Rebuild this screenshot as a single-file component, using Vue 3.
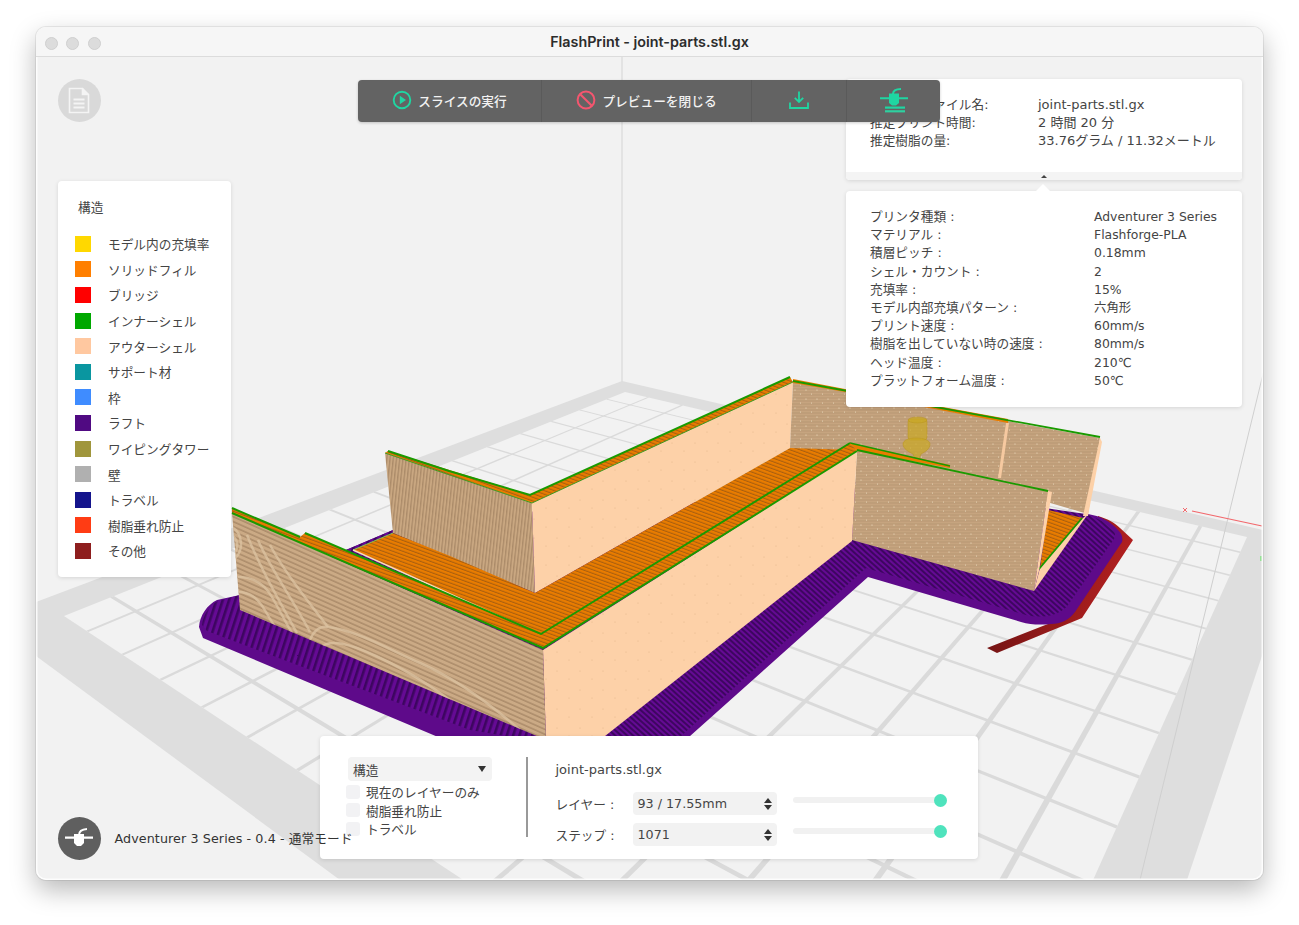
<template>
  <div class="window">
    <!-- Title bar -->
    <header class="titlebar">
      <div class="lights"><i></i><i></i><i></i></div>
      <span class="title">FlashPrint - joint-parts.stl.gx</span>
    </header>

    <main class="viewport">
      <!-- 3D scene, drawn in page coordinates -->
      <svg class="scene" viewBox="36 57 1227 823" width="1227" height="823">
        <defs>
          <pattern id="raftL" width="6" height="6" patternUnits="userSpaceOnUse" patternTransform="rotate(18)">
            <rect width="6" height="6" fill="#650a94" />
            <rect width="2.6" height="6" fill="#3d0660" />
          </pattern>
          <pattern id="raftR" width="4" height="4" patternUnits="userSpaceOnUse" patternTransform="rotate(-48)">
            <rect width="4" height="4" fill="#650a94" />
            <rect width="2" height="4" fill="#3d0660" />
          </pattern>
          <pattern id="orange" width="3.4" height="3.4" patternUnits="userSpaceOnUse" patternTransform="rotate(-70)">
            <rect width="3.4" height="3.4" fill="#e97c00" />
            <rect width="1.1" height="3.4" fill="#a95f10" />
          </pattern>
          <pattern id="tanStripe" width="4.5" height="4.5" patternUnits="userSpaceOnUse" patternTransform="rotate(-66)">
            <rect width="4.5" height="4.5" fill="#cbaa85" />
            <rect width="1.6" height="4.5" fill="#ad8d6b" />
          </pattern>
          <pattern id="tanWeave" width="3.2" height="3.2" patternUnits="userSpaceOnUse" patternTransform="rotate(6)">
            <rect width="3.2" height="3.2" fill="#c9a781" />
            <rect width="1.3" height="3.2" fill="#ab8b69" />
          </pattern>
          <pattern id="tanFine" width="11" height="9" patternUnits="userSpaceOnUse">
            <rect width="11" height="9" fill="#c6a47f" />
            <path d="M0 2h11M0 5h11M0 8h11" stroke="#b59572" stroke-width=".9" />
            <circle cx="3" cy="3" r=".6" fill="#f0e3c8" />
            <circle cx="8.5" cy="7" r=".5" fill="#f0e3c8" />
          </pattern>
          <pattern id="peach" width="23" height="19" patternUnits="userSpaceOnUse">
            <rect width="23" height="19" fill="#fdd1a8" />
            <circle cx="5" cy="6" r=".5" fill="#e0b186" />
            <circle cx="17" cy="14" r=".5" fill="#e0b186" />
          </pattern>
          <linearGradient id="skirt" x1="0" y1="0" x2="1" y2="0.3">
            <stop offset="0" stop-color="#5e1010" />
            <stop offset="1" stop-color="#b42020" />
          </linearGradient>
          <clipPath id="leftWall">
            <polygon points="232,513 543,650 546,740 240,610" />
          </clipPath>
        </defs>

        <!-- Print bed -->
        <polygon points="622,381 1263,530 1263,653 1187,880 340,880 36,656 36,602" fill="#dedede" />
        <polygon :points="bedInner" fill="#f2f2f2" />
        <polygon v-for="(line, i) in bedLines" :key="i" :points="line" fill="#dadada" />
        <line x1="622" y1="57" x2="622" y2="382" stroke="#dedede" stroke-width="1.5" />
        <line x1="1264" y1="370" x2="1140" y2="880" stroke="#cfcfcf" />
        <line x1="1192" y1="511" x2="1262" y2="526" stroke="#f2686c" stroke-width="1.2" />
        <path d="M1183 508l4 4M1187 508l-4 4" stroke="#f2686c" fill="none" />
        <path d="M1261 556v5" stroke="#7fe07f" stroke-width="1.5" />

        <!-- Skirt and raft -->
        <path d="M1098 516c10 3 17 7 22 12l13 12-51 78-85 35-10-5 66-26c8-3 14-7 20-12z" fill="url(#skirt)" />
        <path d="M199 627c1-12 8-22 18-27l23-5 153-65 227-30 468 14c12 2 22 7 30 16 4 4 5 8 4 12l-47 70c-6 8-14 12-24 12-10 1-20 1-30-2l-153-45-188 168H457L203 638z" fill="#5e0a8a" />
        <path d="M202 625c1-10 8-20 16-24l22-6 153-65 147 70v142l-70-12-263-99z" fill="url(#raftL)" />
        <path d="M540 742l140-5 186-169 160 47c9 2 18 2 26 0 7-2 12-5 16-10l46-66c2-4 1-7-2-10-8-8-17-12-27-15L860 480 540 650z" fill="url(#raftR)" />

        <!-- Back left wall and raised part -->
        <polygon points="385,453 532,503 535,593 393,533" fill="url(#tanWeave)" />
        <polygon points="532,503 793,382 790,448 535,593" fill="url(#peach)" />
        <polygon points="353,550 393,533 450,556 535,593 790,448 858,445 541,636" fill="url(#orange)" />
        <polyline points="353,550 393,533" stroke="#7ec850" stroke-width="1" fill="none" />
        <polyline points="353,550 541,635 850,446" stroke="#f4dcc0" stroke-width="1.4" fill="none" />
        <polygon points="388,451 530,495 790,377 793,382 532,503 385,453" fill="url(#orange)" />
        <polyline points="388,451 449,471 530,495 790,377" stroke="#1a9a00" stroke-width="2" fill="none" />
        <polyline points="385,453 532,503 793,382" stroke="#3f9a20" stroke-width="1" fill="none" />

        <!-- Back right wall -->
        <polygon points="793,382 1100,438 1088,514 1040,500 856,450 790,448" fill="url(#tanFine)" />
        <polygon points="1100,438 1102,442 1088,516 1083,516" fill="#fdd1a8" />
        <polygon points="1006,423 1009,423 1001,478 998,478" fill="#f6c9a0" />
        <polygon points="793,379 845,389 1008,419 1008,423 845,392 793,383" fill="#e97c00" />
        <polyline points="793,381 1100,437" stroke="#1a9a00" stroke-width="1.8" fill="none" />

        <!-- Nozzle -->
        <g class="nozzle">
          <rect x="908" y="419" width="19" height="21" rx="3" />
          <ellipse cx="917.500" cy="420" rx="9.500" ry="3" />
          <path d="M903 444c0-4 6-6 13-6s14 2 14 6c0 5-5 8-9 10l-2 5h-4l-2-5c-4-2-10-5-10-10z" />
        </g>

        <!-- Right end of the front wall -->
        <polygon points="1048,510 1083,518 1040,568" fill="url(#orange)" />
        <polygon points="1040,568 1083,518 1088,514 1034,591" fill="#fdd1a8" />
        <polyline points="1039,569 1082,518" stroke="#1a9a00" stroke-width="1.8" fill="none" />
        <polygon points="857,450 1048,492 1034,591 852,540" fill="url(#tanFine)" />
        <polygon points="1048,491 1052,492 1039,571 1034,591" fill="#fdd1a8" />
        <polygon points="850,443 950,465 950,468 857,451" fill="#e97c00" />
        <polyline points="850,443 950,466" stroke="#1a9a00" stroke-width="1.4" fill="none" />
        <polyline points="857,450 1048,491" stroke="#1a9a00" stroke-width="1.8" fill="none" />

        <!-- Front faces -->
        <polygon points="543,650 857,451 852,541 600,740 546,740" fill="url(#peach)" />
        <polygon points="232,513 543,650 546,740 240,610" fill="url(#tanStripe)" />
        <g clip-path="url(#leftWall)" class="grain">
          <path d="M232 527c10 6 14 24 0 34" />
          <path d="M232 535c6 5 8 14 0 20" />
          <path d="M247 535c12 30 30 62 50 98" />
          <path d="M258 540c12 28 34 58 52 92" />
          <path d="M270 545c14 26 36 54 58 82" />
          <path d="M238 577c14 0 26 6 34 20s14 26 20 36" />
          <path d="M238 592c12 0 20 6 28 20s10 16 14 24" />
          <path d="M310 640c4-10 10-14 18-13 30 4 60 22 92 36s70 40 108 74" />
          <path d="M320 648c10-10 30-4 56 8s70 36 110 76" />
        </g>

        <!-- Front ledges -->
        <polygon points="232,508 300,537 305,533 541,634 850,443 857,451 543,648 232,513" fill="url(#orange)" />
        <polyline points="232,508 300,537" stroke="#1a9a00" stroke-width="2" fill="none" />
        <polyline points="305,533 541,634 850,443" stroke="#1a9a00" stroke-width="2" fill="none" />
        <polyline points="232,513 543,648 857,451" stroke="#1a9a00" stroke-width="2" fill="none" />
      </svg>

      <!-- Doc button -->
      <button class="round-btn doc-btn">
        <svg width="24" height="27" viewBox="0 0 24 27" fill="none" stroke="#f4f4f4" stroke-width="1.6">
          <path d="M2.500 1.500h13l6 6v18h-19z" />
          <path d="M15.500 1.500v6h6" fill="#f4f4f4" />
          <path d="M6.500 12.500h11M6.500 16.500h11M6.500 20.500h11" stroke-width="1.8" />
        </svg>
      </button>

      <!-- Structure legend -->
      <aside class="panel legend">
        <h3 class="legend-title">構造</h3>
        <ul class="legend-list">
          <li v-for="item in legend" :key="item.label" class="legend-row">
            <span class="swatch" :style="{ background: item.color }"></span>
            <span>{{ item.label }}</span>
          </li>
        </ul>
      </aside>

      <!-- File info -->
      <section class="panel info-top">
        <dl class="info-grid info-grid-top">
          <template v-for="row in fileInfo" :key="row[0]">
            <dt>{{ row[0] }}</dt>
            <dd>{{ row[1] }}</dd>
          </template>
        </dl>
        <div class="collapse-strip"><span class="mini-arrow"></span></div>
      </section>
      <section class="panel info-bottom">
        <span class="pointer"></span>
        <dl class="info-grid info-grid-bottom">
          <template v-for="row in printInfo" :key="row[0]">
            <dt>{{ row[0] }}</dt>
            <dd>{{ row[1] }}</dd>
          </template>
        </dl>
      </section>

      <!-- Toolbar -->
      <nav class="toolbar">
        <div class="tool tool-slice">
          <svg width="20" height="20" viewBox="0 0 20 20" fill="none">
            <circle cx="10" cy="10" r="8.300" stroke="#1fd6a2" stroke-width="1.9" />
            <path d="M7.800 5.800v8.400l6.200-4.200z" fill="#1fd6a2" />
          </svg>
          <span>スライスの実行</span>
        </div>
        <div class="tool tool-close">
          <svg width="20" height="20" viewBox="0 0 20 20" fill="none" stroke="#f4566f" stroke-width="2">
            <circle cx="10" cy="10" r="8.400" />
            <path d="M4.200 4.200l11.600 11.600" />
          </svg>
          <span>プレビューを閉じる</span>
        </div>
        <div class="tool tool-save">
          <svg width="22" height="20" viewBox="0 0 22 20" fill="none" stroke="#1fd6a2" stroke-width="1.8">
            <path d="M11 1.500v10M6.800 7.800L11 12l4.200-4.200" />
            <path d="M2 12.500v5.500h18v-5.500" />
          </svg>
        </div>
        <div class="tool tool-printer">
          <svg width="28" height="26" viewBox="0 0 28 26" fill="#1fd6a2">
            <path d="M0 10.200h28v2H0z" />
            <path d="M9 6.500h10v9.500l-3 2.500h-4l-3-2.500z" />
            <path d="M13 7c0-3 2.500-5 8-5" fill="none" stroke="#1fd6a2" stroke-width="2" />
            <rect x="5" y="19.500" width="20" height="2.200" />
            <rect x="5" y="23.200" width="20" height="2.200" fill="#2fd0a0" />
          </svg>
        </div>
      </nav>

      <!-- Layer controls -->
      <section class="panel controls">
        <div class="control-left">
          <div class="select">
            <span>構造</span>
            <span class="select-arrow"></span>
          </div>
          <label v-for="opt in options" :key="opt" class="check-row">
            <span class="check"></span>
            <span>{{ opt }}</span>
          </label>
        </div>
        <div class="divider"></div>
        <div class="control-right">
          <div class="file-name">joint-parts.stl.gx</div>
          <div v-for="row in steppers" :key="row.label" class="stepper-row">
            <span class="stepper-label">{{ row.label }}</span>
            <div class="stepper">
              <span>{{ row.value }}</span>
              <span class="spin"><i class="up"></i><i class="down"></i></span>
            </div>
            <div class="slider"><span class="thumb"></span></div>
          </div>
        </div>
      </section>

      <!-- Printer status -->
      <div class="status">
        <button class="round-btn printer-btn">
          <svg width="28" height="22" viewBox="0 0 28 22" fill="#fff">
            <path d="M0 9.500h28v2.200H0z" />
            <path d="M9 7h10v9l-3 3h-4l-3-3z" />
            <path d="M14 8c0-3 2-5.500 8-6" fill="none" stroke="#fff" stroke-width="2" />
          </svg>
        </button>
        <span>Adventurer 3 Series - 0.4 - 通常モード</span>
      </div>
    </main>
  </div>
</template>

<script setup>
const legend = [
  { label: 'モデル内の充填率', color: '#ffd800' },
  { label: 'ソリッドフィル', color: '#ff7f00' },
  { label: 'ブリッジ', color: '#ff0000' },
  { label: 'インナーシェル', color: '#00a800' },
  { label: 'アウターシェル', color: '#ffc8a0' },
  { label: 'サポート材', color: '#0a96a0' },
  { label: '枠', color: '#3f8cff' },
  { label: 'ラフト', color: '#500a82' },
  { label: 'ワイピングタワー', color: '#a0963c' },
  { label: '壁', color: '#b0b0b0' },
  { label: 'トラベル', color: '#14148c' },
  { label: '樹脂垂れ防止', color: '#ff3c14' },
  { label: 'その他', color: '#8e1e1e' },
]

const fileInfo = [
  ['プリントファイル名:', 'joint-parts.stl.gx'],
  ['推定プリント時間:', '2 時間 20 分'],
  ['推定樹脂の量:', '33.76グラム / 11.32メートル'],
]

const printInfo = [
  ['プリンタ種類 :', 'Adventurer 3 Series'],
  ['マテリアル :', 'Flashforge-PLA'],
  ['積層ピッチ :', '0.18mm'],
  ['シェル・カウント :', '2'],
  ['充填率 :', '15%'],
  ['モデル内部充填パターン :', '六角形'],
  ['プリント速度 :', '60mm/s'],
  ['樹脂を出していない時の速度 :', '80mm/s'],
  ['ヘッド温度 :', '210℃'],
  ['プラットフォーム温度 :', '50℃'],
]

const options = ['現在のレイヤーのみ', '樹脂垂れ防止', 'トラベル']

const steppers = [
  { label: 'レイヤー :', value: '93 / 17.55mm' },
  { label: 'ステップ :', value: '1071' },
]

// Bed grid: unit square mapped onto the perspective quad of the bed
const [x0, y0, x1, y1, x2, y2, x3, y3] = [625, 392, 1247, 537, 949, 1201, 64, 616]
const det = (x1 - x2) * (y3 - y2) - (x3 - x2) * (y1 - y2)
const sx = x0 - x1 + x2 - x3
const sy = y0 - y1 + y2 - y3
const g = (sx * (y3 - y2) - (x3 - x2) * sy) / det
const h = ((x1 - x2) * sy - sx * (y1 - y2)) / det

const project = (u, v) => {
  const w = g * u + h * v + 1
  const x = ((x1 - x0 + g * x1) * u + (x3 - x0 + h * x3) * v + x0) / w
  const y = ((y1 - y0 + g * y1) * u + (y3 - y0 + h * y3) * v + y0) / w
  return `${x.toFixed(1)},${y.toFixed(1)}`
}

const bedInner = [project(0, 0), project(1, 0), project(1, 1), project(0, 1)].join(' ')

const bedLines = []
const half = 0.0022
for (let j = -6; j <= 6; j++) {
  const t = 0.5 + 0.0745 * j
  bedLines.push([project(0, t - half), project(1, t - half), project(1, t + half), project(0, t + half)].join(' '))
  bedLines.push([project(t - half, 0), project(t - half, 1), project(t + half, 1), project(t + half, 0)].join(' '))
}
</script>

<style scoped>
.window {
  width: 1227px;
  height: 853px;
  margin-left: 36px;
  position: relative;
  top: 27px;
  border-radius: 10px;
  overflow: hidden;
  display: flex;
  flex-direction: column;
  box-shadow: 0 0 0 1px rgba(0, 0, 0, 0.07), 0 10px 26px rgba(0, 0, 0, 0.28);
  font-family: "DejaVu Sans", "Noto Sans CJK JP", sans-serif;
  font-size: 12.700px;
  color: #444;
}

.titlebar {
  flex: 0 0 30px;
  box-sizing: border-box;
  display: flex;
  align-items: center;
  justify-content: center;
  position: relative;
  background: #f6f6f6;
  border-bottom: 1px solid #dcdcdc;
}

.lights {
  position: absolute;
  left: 8.500px;
  top: 9.500px;
  display: flex;
  gap: 8.500px;
}

.lights i {
  width: 11px;
  height: 11px;
  border-radius: 50%;
  background: #dcdcdc;
  border: 1px solid #cfcfcf;
}

.title {
  font-family: Inter, "Liberation Sans", sans-serif;
  font-weight: 600;
  font-size: 14.300px;
  color: #2c2c2c;
}

.viewport {
  flex: 1;
  position: relative;
  background: #f2f2f2;
  overflow: hidden;
}

/* thin light rim of the window */
.viewport::after {
  content: "";
  position: absolute;
  inset: -2px 0 0;
  border-radius: 0 0 10px 10px;
  box-shadow: inset 0 0 0 1.500px rgba(255, 255, 255, 0.85);
  pointer-events: none;
}

.scene {
  position: absolute;
  inset: 0;
  display: block;
}

.nozzle {
  fill: #c9a826;
  fill-opacity: 0.72;
  stroke: #b8951e;
  stroke-width: 0.5;
}

.grain path {
  fill: none;
  stroke: #dcc3a2;
  stroke-width: 2.500;
  stroke-opacity: 0.75;
}

.panel {
  position: absolute;
  background: #fff;
  border-radius: 4px;
  box-shadow: 0 1px 4px rgba(0, 0, 0, 0.12);
}

.round-btn {
  width: 43px;
  height: 43px;
  padding: 0;
  border: none;
  border-radius: 50%;
  display: flex;
  align-items: center;
  justify-content: center;
}

.doc-btn {
  position: absolute;
  left: 21.500px;
  top: 21.500px;
  background: #d9d9d9;
}

.legend {
  left: 22px;
  top: 124px;
  width: 173px;
  height: 396px;
  box-sizing: border-box;
  padding: 18px 17px 0;
}

.legend-title {
  margin: 0 0 14px 3px;
  font-size: 12.700px;
  font-weight: 400;
  line-height: 18px;
}

.legend-list {
  margin: 0;
  padding: 0;
  list-style: none;
}

.legend-row {
  display: flex;
  align-items: center;
  gap: 17px;
  height: 25.600px;
}

.swatch {
  width: 16px;
  height: 16px;
  flex: none;
}

.info-top {
  left: 810px;
  top: 22px;
  width: 396px;
  height: 101px;
  overflow: hidden;
}

.info-bottom {
  left: 810px;
  top: 134px;
  width: 396px;
  height: 216px;
}

.info-grid {
  margin: 0;
  padding: 17px 24px 0;
  display: grid;
  line-height: 18.200px;
}

.info-grid-top {
  grid-template-columns: 168px 1fr;
}

.info-grid-top dd {
  font-size: 13px;
}

.info-grid-bottom {
  grid-template-columns: 224px 1fr;
}

.info-grid-bottom dd {
  font-size: 12.400px;
}

.info-grid dt,
.info-grid dd {
  margin: 0;
  white-space: nowrap;
}

.collapse-strip {
  position: absolute;
  left: 0;
  right: 0;
  bottom: 0;
  height: 8px;
  background: #f4f4f4;
  display: flex;
  justify-content: center;
  align-items: center;
}

.mini-arrow {
  margin-left: -1px;
  border-left: 3px solid transparent;
  border-right: 3px solid transparent;
  border-bottom: 3px solid #444;
}

.pointer {
  position: absolute;
  left: 190px;
  top: -7px;
  border-left: 7px solid transparent;
  border-right: 7px solid transparent;
  border-bottom: 7px solid #fff;
}

.toolbar {
  position: absolute;
  left: 322px;
  top: 23px;
  width: 582px;
  height: 42px;
  display: flex;
  background: #636363;
  border-radius: 4px;
  box-shadow: 0 1px 3px rgba(0, 0, 0, 0.2);
  color: #f2f2f2;
  font-family: "Noto Sans CJK JP", sans-serif;
  font-size: 12.700px;
  font-weight: 500;
}

.tool {
  display: flex;
  align-items: center;
  justify-content: center;
  gap: 6px;
  box-sizing: border-box;
  padding-bottom: 2px;
  border-left: 1px solid #5a5a5a;
}

.tool:first-child {
  border-left: none;
}

.tool-slice {
  width: 183px;
}

.tool-close {
  width: 210px;
}

.tool-save {
  width: 95px;
}

.tool-printer {
  width: 94px;
}

.controls {
  left: 284px;
  top: 679px;
  width: 658px;
  height: 123px;
  box-sizing: border-box;
  padding: 21px 0 0 28px;
  display: flex;
  align-items: flex-start;
}

.control-left {
  width: 144px;
}

.select {
  height: 24px;
  box-sizing: border-box;
  padding: 0 6px 0 5px;
  margin-bottom: 1.500px;
  display: flex;
  align-items: center;
  justify-content: space-between;
  background: #f3f3f3;
  border-radius: 4px;
}

.select-arrow {
  border-left: 4px solid transparent;
  border-right: 4px solid transparent;
  border-top: 6px solid #333;
}

.check-row {
  display: flex;
  align-items: center;
  gap: 6px;
  height: 18.500px;
  margin-left: -2px;
}

.check {
  width: 14px;
  height: 14px;
  background: #f2f2f4;
  border-radius: 3px;
}

.divider {
  width: 1.500px;
  height: 80px;
  margin-left: 34px;
  background: #999;
}

.control-right {
  margin-left: 28px;
  padding-top: 4px;
}

.file-name {
  font-size: 13px;
  line-height: 18px;
  margin-bottom: 13px;
}

.stepper-row {
  display: flex;
  align-items: center;
  height: 23px;
  margin-bottom: 8px;
}

.stepper-label {
  width: 77px;
}

.stepper {
  width: 144px;
  height: 23px;
  box-sizing: border-box;
  padding: 0 5px;
  display: flex;
  align-items: center;
  justify-content: space-between;
  background: #f2f2f2;
  border-radius: 4px;
}

.spin {
  display: flex;
  flex-direction: column;
  gap: 2px;
}

.spin i {
  border-left: 4px solid transparent;
  border-right: 4px solid transparent;
}

.spin .up {
  border-bottom: 5px solid #333;
}

.spin .down {
  border-top: 5px solid #333;
}

.slider {
  position: relative;
  width: 154px;
  height: 6px;
  margin: -7px 0 0 16px;
  background: #f1f1f1;
  border-radius: 3px;
}

.thumb {
  position: absolute;
  right: 0;
  top: -3.500px;
  width: 13px;
  height: 13px;
  border-radius: 50%;
  background: #4fe3bd;
}

.status {
  position: absolute;
  left: 21.500px;
  top: 759.500px;
  display: flex;
  align-items: center;
  gap: 14px;
  color: #333;
  white-space: nowrap;
  letter-spacing: 0.1px;
}

.status span {
  margin-top: -2px;
}

.printer-btn {
  background: #5f5f5f;
}
</style>

<style>
html,
body {
  height: 100%;
  background: #fff;
}
</style>
